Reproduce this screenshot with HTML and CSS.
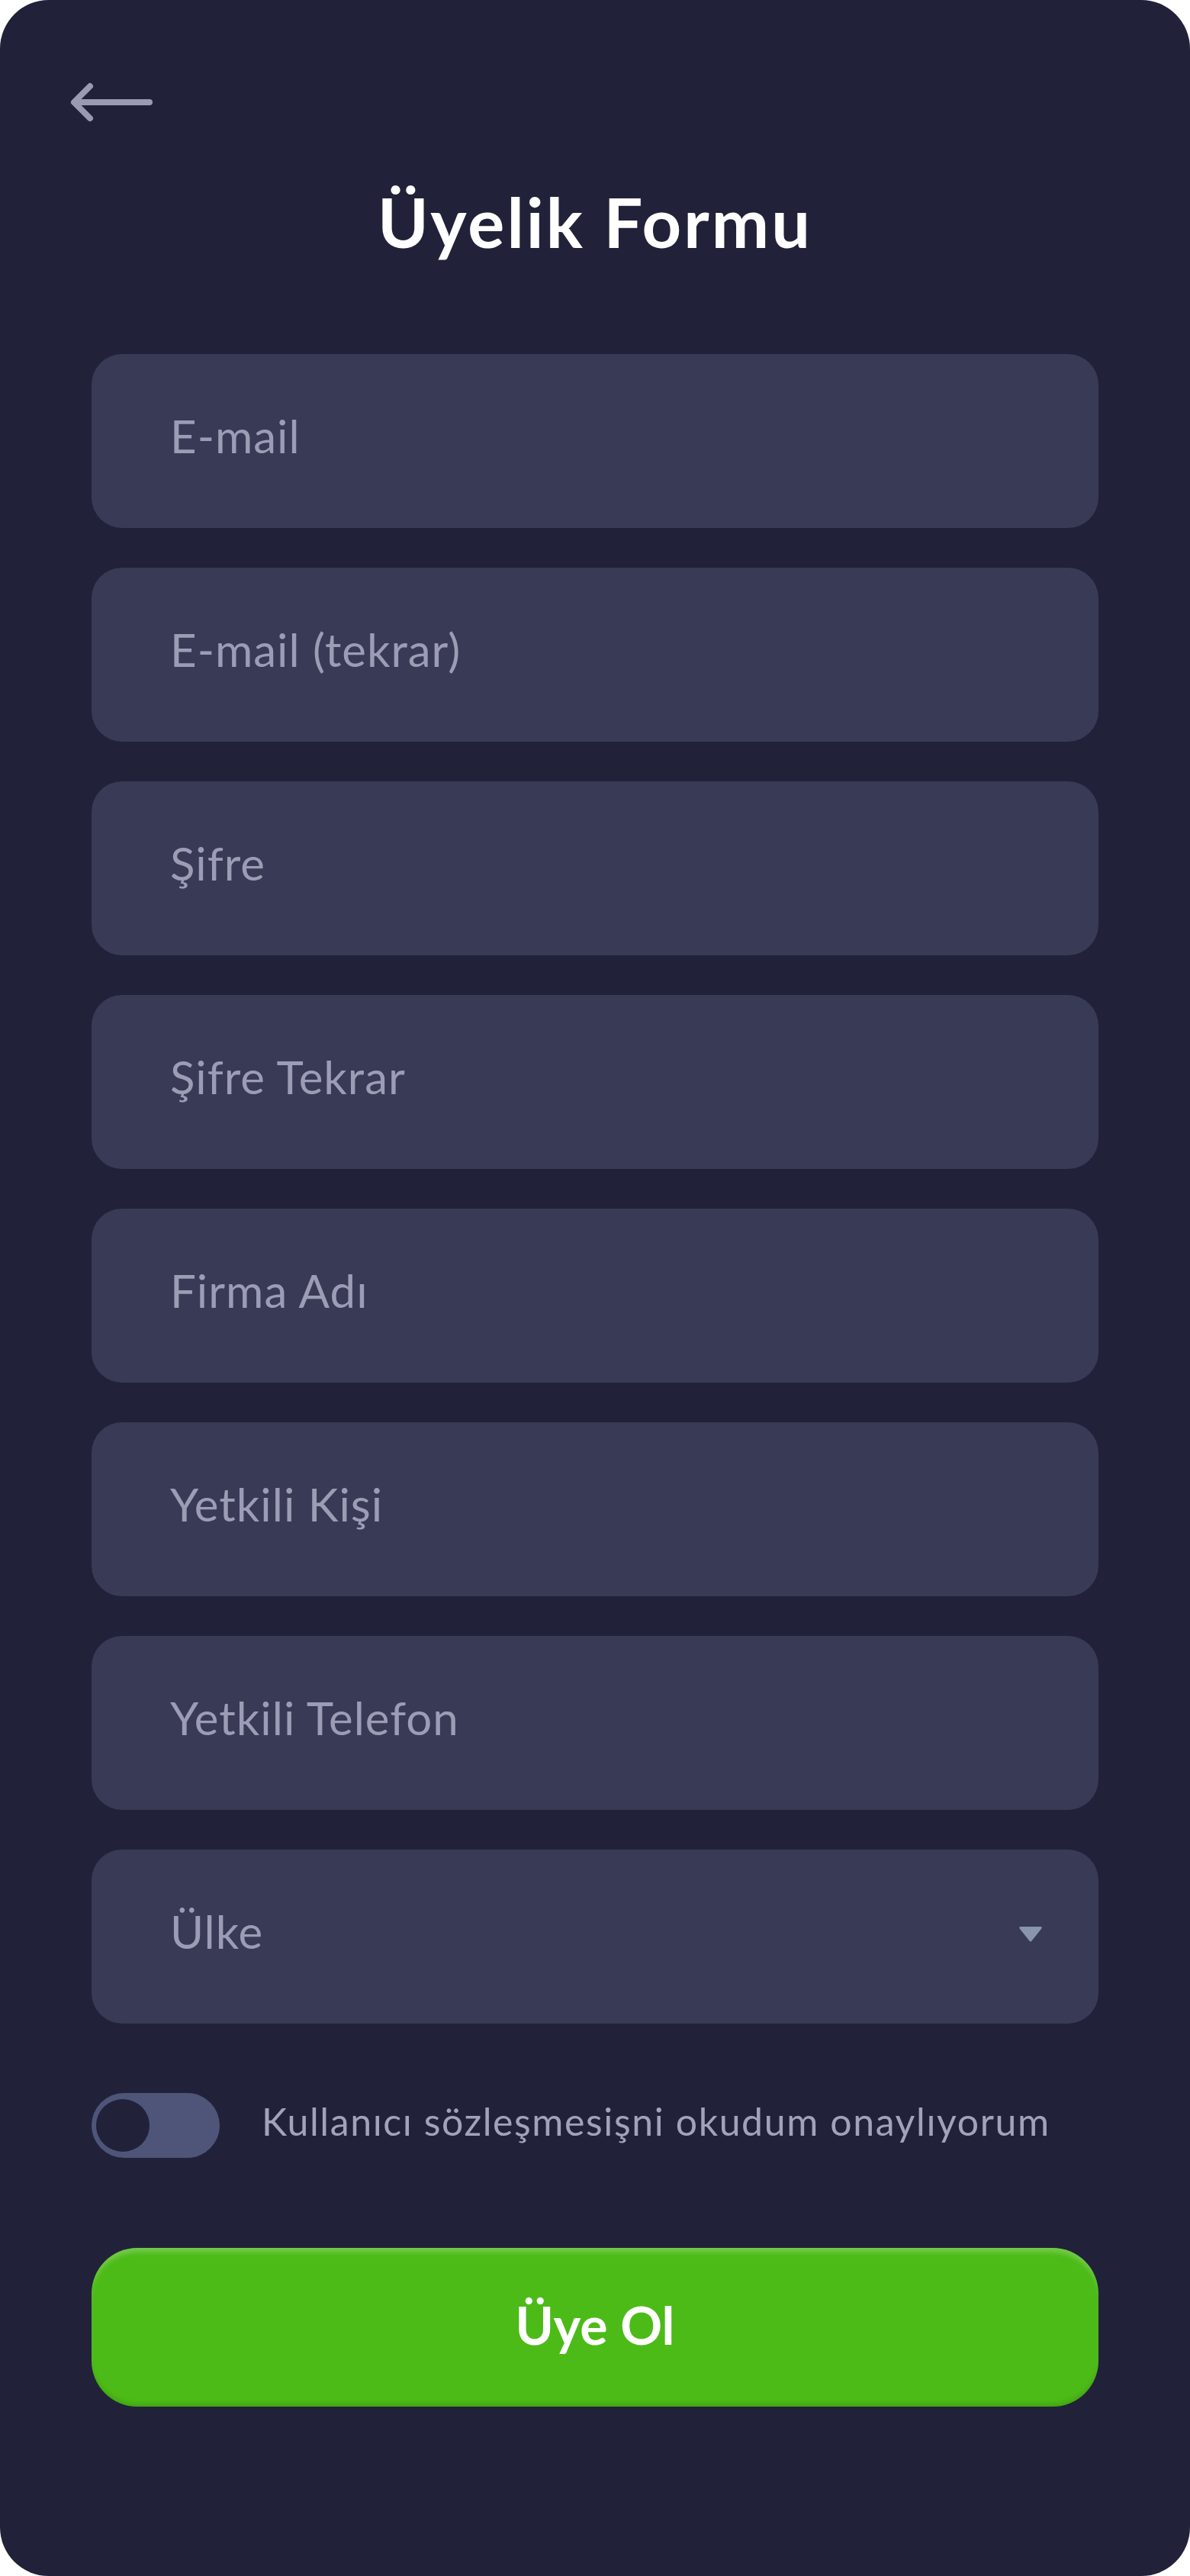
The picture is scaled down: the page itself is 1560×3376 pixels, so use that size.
FILE: index.html
```html
<!DOCTYPE html>
<html lang="tr">
<head>
<meta charset="utf-8">
<title>Üyelik Formu</title>
<link rel="stylesheet" href="styles.css">
</head>
<body>
<div class="screen">
  <header class="top">
    <button class="back" type="button" aria-label="Geri">
      <svg width="108" height="52" viewBox="0 0 108 52" fill="none" stroke="#9a9bb3" stroke-width="8" stroke-linecap="round" stroke-linejoin="round">
        <path d="M104 26H6"/>
        <path d="M26 5L5 26L26 47"/>
      </svg>
    </button>
    <h1 class="title">Üyelik Formu</h1>
  </header>
  <form class="form">
    <input class="field" type="email" placeholder="E-mail">
    <input class="field" type="email" placeholder="E-mail (tekrar)">
    <input class="field" type="password" placeholder="Şifre">
    <input class="field" type="password" placeholder="Şifre Tekrar">
    <input class="field" type="text" placeholder="Firma Adı">
    <input class="field" type="text" placeholder="Yetkili Kişi">
    <input class="field" type="tel" placeholder="Yetkili Telefon">
    <div class="field select">
      <span>Ülke</span>
      <svg width="34" height="24" viewBox="0 0 34 24"><path d="M4 1H30Q33 1 31 4L19 19Q17 22 15 19L3 4Q1 1 4 1Z" fill="#8994ad"/></svg>
    </div>
    <label class="agree">
      <span class="toggle"><span class="knob"></span></span>
      <span class="agree-text">Kullanıcı sözleşmesişni okudum onaylıyorum</span>
    </label>
    <button class="submit" type="button">Üye Ol</button>
  </form>
</div>
</body>
</html>
```
FILE: styles.css
```css
* { box-sizing: border-box; }
html, body { margin: 0; padding: 0; background: #ffffff; }
body { font-family: "Lato", "Inter", sans-serif; }

.screen {
  width: 1560px;
  height: 3376px;
  background: #212239;
  border-radius: 64px;
  overflow: hidden;
}

.top {
  padding: 108px 0 0 0;
  display: flex;
  flex-direction: column;
}

.back {
  margin-left: 92px;
  padding: 0;
  border: 0;
  background: none;
  width: 108px;
  height: 52px;
  display: block;
}
.back svg { display: block; }

.title {
  margin: 80px 0 0 0;
  text-align: center;
  color: #ffffff;
  font-weight: 700;
  font-size: 90px;
  line-height: 100px;
  letter-spacing: 3px;
}

.form {
  margin-top: 124px;
  padding: 0 120px;
  display: flex;
  flex-direction: column;
  gap: 52px;
}

.field {
  display: flex;
  align-items: center;
  justify-content: space-between;
  width: 100%;
  height: 228px;
  border: 0;
  border-radius: 40px;
  background: #393a56;
  padding: 0 72px 14px 103px;
  font-family: inherit;
  font-size: 60px;
  letter-spacing: 1px;
  color: #9c9cb4;
  outline: none;
}
.field::placeholder { color: #9c9cb4; opacity: 1; }
.select svg { display: block; margin-top: 10px; }

.agree {
  display: flex;
  align-items: center;
  gap: 55px;
  margin-top: 39px;
}
.toggle {
  width: 168px;
  height: 85px;
  border-radius: 43px;
  background: #4e5579;
  padding: 8px 6px;
  display: flex;
  flex-shrink: 0;
}
.knob {
  width: 70px;
  height: 69px;
  border-radius: 50%;
  background: #212239;
}
.agree-text {
  font-size: 50px;
  letter-spacing: 1.6px;
  color: #a2a2ba;
  margin-top: -12px;
}

.submit {
  margin-top: 66px;
  width: 100%;
  height: 208px;
  border: 0;
  border-radius: 60px;
  background: #4cbb17;
  color: #ffffff;
  font-family: inherit;
  font-weight: 700;
  font-size: 68px;
  box-shadow: inset 0 8px 6px -2px rgba(255, 255, 255, 0.22), inset 0 -6px 6px -2px rgba(0, 0, 0, 0.12);
  padding-bottom: 8px;
}
```
